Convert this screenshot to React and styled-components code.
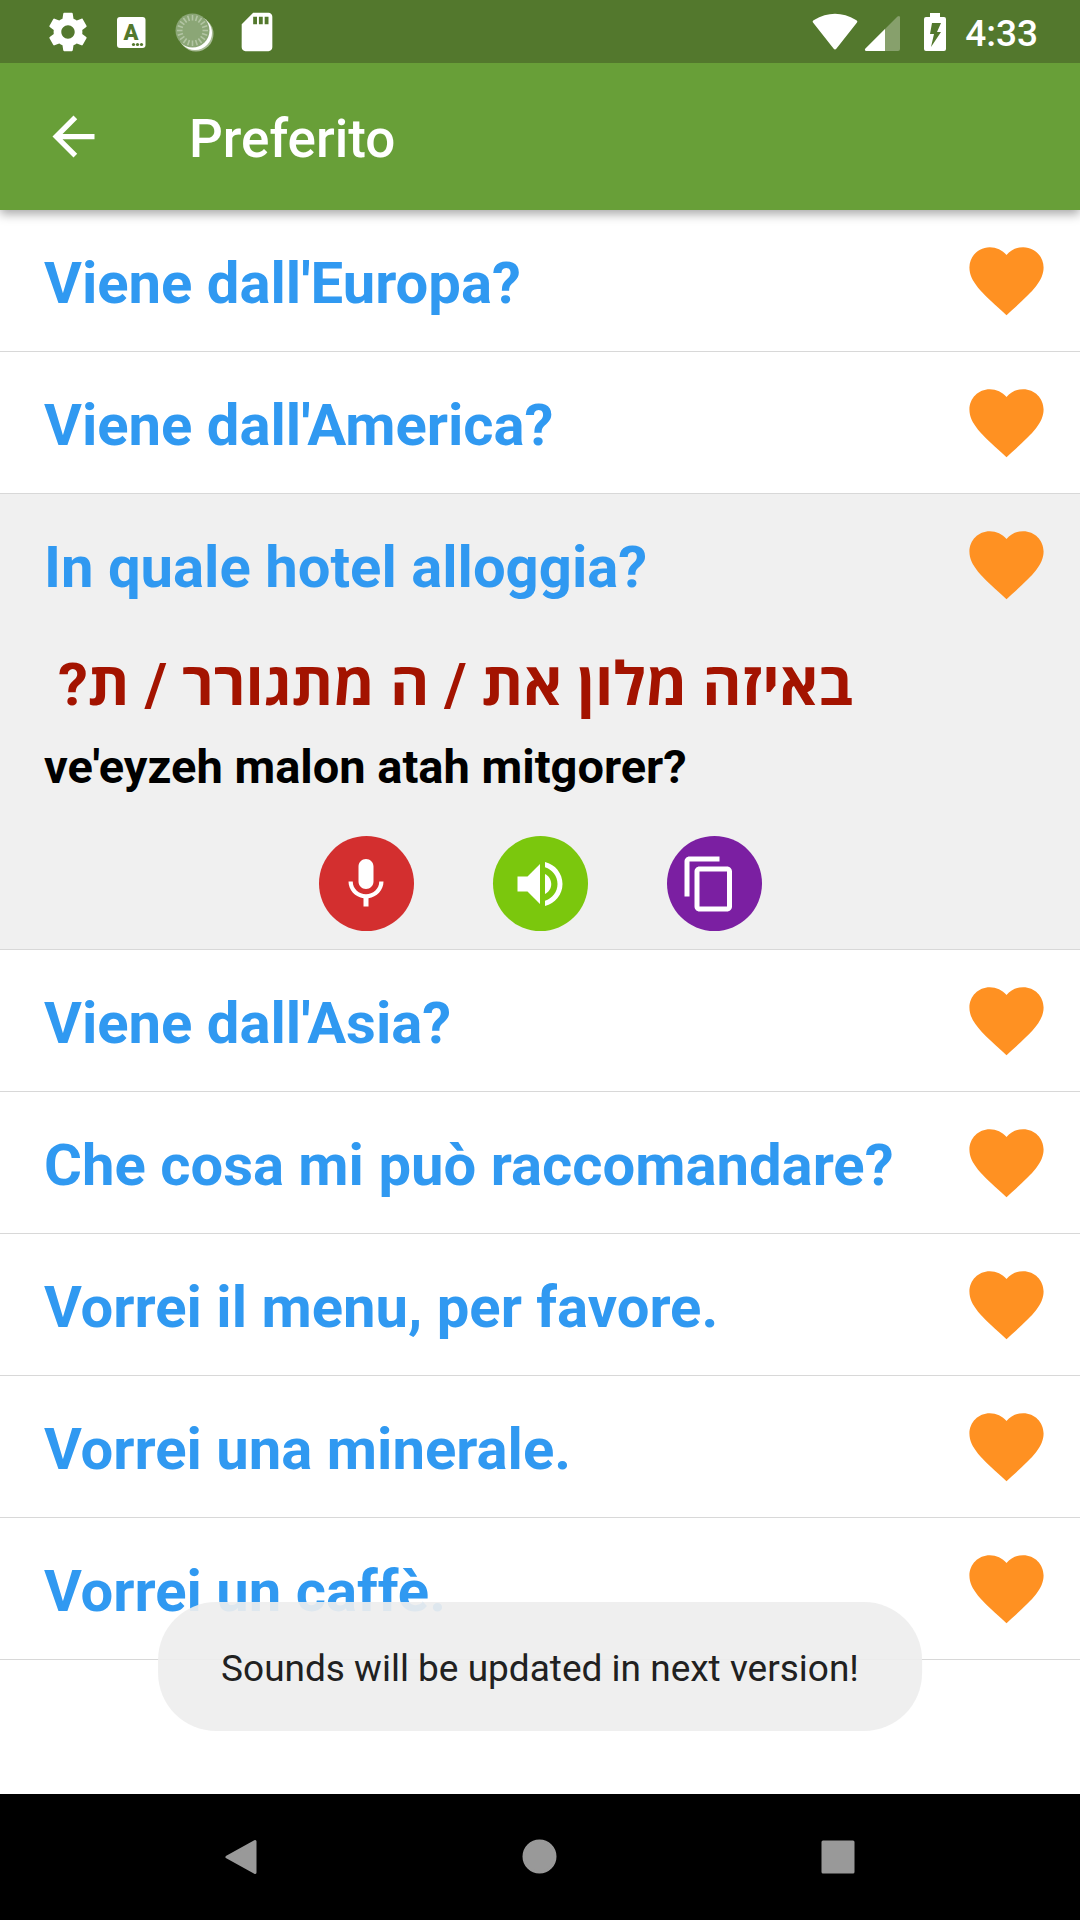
import styled, { createGlobalStyle } from "styled-components";

const phrases = [
  { text: "Viene dall'Europa?" },
  { text: "Viene dall'America?" },
  {
    text: "In quale hotel alloggia?",
    hebrew: "באיזה מלון את / ה מתגורר / ת?",
    spoken: "ve'eyzeh malon atah mitgorer?",
  },
  { text: "Viene dall'Asia?" },
  { text: "Che cosa mi può raccomandare?" },
  { text: "Vorrei il menu, per favore." },
  { text: "Vorrei una minerale." },
  { text: "Vorrei un caffè." },
];

const sunRays = Array.from({ length: 20 }, (_, i) => i * 18);

export default function App() {
  return (
    <>
      <GlobalStyle />
      <Screen>
        <StatusBar>
          <StatusGroup>
            <SettingsIcon />
            <KeyboardIcon />
            <SyncIcon />
            <SdCardIcon />
          </StatusGroup>
          <StatusGroup>
            <NetworkIcons />
            <BatteryIcon />
            <Clock>4:33</Clock>
          </StatusGroup>
        </StatusBar>

        <AppBar>
          <IconButton aria-label="Back">
            <Icon $size={63} viewBox="0 0 24 24">
              <path d="M20 11H7.83l5.59-5.59L12 4l-8 8 8 8 1.41-1.41L7.83 13H20v-2z" />
            </Icon>
          </IconButton>
          <Title>Preferito</Title>
        </AppBar>

        <Main>
          <List>
            {phrases.map((phrase) => (
              <Phrase key={phrase.text} {...phrase} />
            ))}
          </List>
          <Toast role="status">Sounds will be updated in next version!</Toast>
        </Main>

        <NavBar>
          <IconButton aria-label="Navigate back">
            <NavIcon viewBox="0 0 36 36">
              <path d="M31 2.500v31L3 18z" />
            </NavIcon>
          </IconButton>
          <IconButton aria-label="Home">
            <NavIcon viewBox="0 0 36 36">
              <circle cx="17.500" cy="17.500" r="15.500" />
            </NavIcon>
          </IconButton>
          <IconButton aria-label="Recent apps">
            <NavIcon viewBox="0 0 36 36">
              <rect x="3" y="3" width="30" height="30" />
            </NavIcon>
          </IconButton>
        </NavBar>
      </Screen>
    </>
  );
}

function Phrase({ text, hebrew, spoken }) {
  return (
    <Item $open={Boolean(hebrew)}>
      <Row>
        <PhraseText>{text}</PhraseText>
        <HeartButton aria-label="Remove from favorites">
          <Icon $size={89} viewBox="0 0 24 24">
            <path d="M12 21.35l-1.45-1.32C5.4 15.36 2 12.28 2 8.5 2 5.42 4.42 3 7.5 3c1.74 0 3.41.81 4.5 2.09C13.09 3.81 14.76 3 16.5 3 19.58 3 22 5.42 22 8.5c0 3.78-3.4 6.86-8.55 11.54L12 21.35z" />
          </Icon>
        </HeartButton>
      </Row>
      {hebrew && (
        <Details>
          <Hebrew lang="he" dir="rtl">
            {hebrew}
          </Hebrew>
          <Spoken>{spoken}</Spoken>
          <Actions>
            <RoundButton $color="#d32f2f" aria-label="Record">
              <Icon $size={60} viewBox="0 0 24 24">
                <path d="M12 14c1.66 0 3-1.34 3-3V5c0-1.66-1.34-3-3-3S9 3.34 9 5v6c0 1.66 1.34 3 3 3zm5.3-3c0 3-2.54 5.1-5.3 5.1S6.7 14 6.7 11H5c0 3.41 2.72 6.23 6 6.72V21h2v-3.28c3.28-.48 6-3.3 6-6.72h-1.7z" />
              </Icon>
            </RoundButton>
            <RoundButton $color="#7bc70d" aria-label="Listen">
              <Icon $size={60} viewBox="0 0 24 24">
                <path d="M3 9v6h4l5 5V4L7 9H3zm13.5 3c0-1.77-1.02-3.29-2.5-4.03v8.05c1.48-.73 2.5-2.25 2.5-4.02zM14 3.23v2.06c2.89.86 5 3.54 5 6.71s-2.11 5.85-5 6.71v2.06c4.01-.91 7-4.49 7-8.77s-2.99-7.86-7-8.77z" />
              </Icon>
            </RoundButton>
            <RoundButton $color="#7b1fa2" aria-label="Copy">
              <Icon $size={60} viewBox="1.8 0 24 24">
                <path d="M16 1H4c-1.1 0-2 .9-2 2v14h2V3h12V1zm3 4H8c-1.1 0-2 .9-2 2v14c0 1.1.9 2 2 2h11c1.1 0 2-.9 2-2V7c0-1.1-.9-2-2-2zm0 16H8V7h11v14z" />
              </Icon>
            </RoundButton>
          </Actions>
        </Details>
      )}
    </Item>
  );
}

function SettingsIcon() {
  return (
    <Icon $size={46} viewBox="0 0 24 24">
      <path d="M19.43 12.98c.04-.32.07-.64.07-.98s-.03-.66-.07-.98l2.11-1.65c.19-.15.24-.42.12-.64l-2-3.46c-.12-.22-.39-.3-.61-.22l-2.49 1c-.52-.4-1.08-.73-1.69-.98l-.38-2.65C14.46 2.18 14.25 2 14 2h-4c-.25 0-.46.18-.49.42l-.38 2.65c-.61.25-1.17.59-1.69.98l-2.49-1c-.23-.09-.49 0-.61.22l-2 3.46c-.13.22-.07.49.12.64l2.11 1.65c-.04.32-.07.65-.07.98s.03.66.07.98l-2.11 1.65c-.19.15-.24.42-.12.64l2 3.46c.12.22.39.3.61.22l2.49-1c.52.4 1.08.73 1.69.98l.38 2.65c.03.24.24.42.49.42h4c.25 0 .46-.18.49-.42l.38-2.65c.61-.25 1.17-.59 1.69-.98l2.49 1c.23.09.49 0 .61-.22l2-3.46c.12-.22.07-.49-.12-.64l-2.11-1.65zM12 15.5c-1.93 0-3.5-1.57-3.5-3.5s1.57-3.5 3.5-3.5 3.5 1.57 3.5 3.5-1.57 3.5-3.5 3.5z" />
    </Icon>
  );
}

function KeyboardIcon() {
  return (
    <Icon $size={46} viewBox="0 0 46 46">
      <rect x="9" y="8" width="28.500" height="31" rx="3" />
      <IconLetter x="23" y="31">
        A
      </IconLetter>
      <g fill="#53782d">
        <circle cx="25.500" cy="35.500" r="1.600" />
        <circle cx="29.500" cy="35.500" r="1.600" />
        <circle cx="33.500" cy="35.500" r="1.600" />
      </g>
    </Icon>
  );
}

function SyncIcon() {
  return (
    <Icon $size={46} viewBox="0 0 46 46">
      <circle cx="25" cy="25" r="17.500" opacity="0.5" />
      <circle cx="24" cy="24" r="17" />
      <circle cx="21.500" cy="21.500" r="17" fill="#8ba676" />
      <g stroke="#b3c5a4" strokeWidth="1.600">
        {sunRays.map((angle) => (
          <path
            key={angle}
            d="M21.500 6v5.500"
            transform={`rotate(${angle} 21.5 21.5)`}
          />
        ))}
      </g>
    </Icon>
  );
}

function SdCardIcon() {
  return (
    <Icon $size={46} viewBox="0 0 24 24">
      <path d="M18 2h-8L4.02 8 4 20c0 1.1.9 2 2 2h12c1.1 0 2-.9 2-2V4c0-1.1-.9-2-2-2zm-6 6h-2V4h2v4zm3 0h-2V4h2v4zm3 0h-2V4h2v4z" />
    </Icon>
  );
}

function NetworkIcons() {
  return (
    <StatusSvg width="93" height="46" viewBox="0 0 93 46">
      <path d="M1 13.500Q0 12 2 11Q23 -1.500 44 11Q46 12 45 13.500L24.500 39.500Q23 41.500 21.500 39.500z" />
      <path
        d="M54 42Q52 41 53.500 39.500L85.500 7.500Q88 6 88 8.500V40Q88 42 86 42z"
        opacity="0.3"
      />
      <path d="M54 42Q52 41 53.500 39.500L73 20V42z" />
    </StatusSvg>
  );
}

function BatteryIcon() {
  return (
    <StatusSvg width="26" height="46" viewBox="0 0 26 46">
      <path
        fillRule="evenodd"
        d="M8 4h10v4h4q2 0 2 2v30q0 2-2 2H4q-2 0-2-2V10q0-2 2-2h4zM10 14L8 25h4L9 38l10-15h-4l4-9z"
      />
    </StatusSvg>
  );
}

const GlobalStyle = createGlobalStyle`
  * {
    box-sizing: border-box;
  }

  body {
    margin: 0;
    background-color: white;
    font-family: Roboto, "Open Sans", sans-serif;
  }
`;

const Screen = styled.div`
  display: flex;
  flex-direction: column;
  min-height: 100vh;
`;

const StatusBar = styled.div`
  display: flex;
  justify-content: space-between;
  align-items: center;
  height: 63px;
  padding: 0 42px 0 45px;
  background-color: #53782d;
  color: white;
  z-index: 2;
`;

const StatusGroup = styled.div`
  display: flex;
  align-items: center;
  gap: 17px;
`;

const Icon = styled.svg`
  display: block;
  width: ${({ $size }) => $size}px;
  height: ${({ $size }) => $size}px;
  fill: currentColor;
`;

const StatusSvg = styled.svg`
  display: block;
  fill: currentColor;
`;

const IconLetter = styled.text`
  fill: #53782d;
  font-size: 22px;
  font-weight: 900;
  text-anchor: middle;
`;

const Clock = styled.span`
  padding-top: 4px;
  font-size: 37px;
  font-weight: 500;
  line-height: 46px;
`;

const AppBar = styled.header`
  display: flex;
  align-items: center;
  gap: 84px;
  height: 147px;
  padding: 0 42px;
  background-color: #689f38;
  color: white;
  box-shadow: 0 4px 10px rgba(0, 0, 0, 0.35);
  z-index: 1;
`;

const IconButton = styled.button`
  padding: 0;
  border: 0;
  background: none;
  color: inherit;
`;

const Title = styled.h1`
  margin: 0;
  padding-top: 4px;
  font-size: 53px;
  font-weight: 500;
`;

const Main = styled.main`
  position: relative;
  flex: 1;
`;

const List = styled.ul`
  margin: 0;
  padding: 0;
  list-style: none;
`;

const Item = styled.li`
  border-bottom: 1px solid #d8d8d8;
  background-color: ${({ $open }) => ($open ? "#f0f0f0" : "white")};
`;

const Row = styled.div`
  display: flex;
  justify-content: space-between;
  align-items: center;
  height: 141px;
  padding: 0 29px 0 44px;
`;

const PhraseText = styled.h2`
  margin: 0;
  padding-top: 4px;
  color: #3099f1;
  font-size: 58px;
  font-weight: 700;
  line-height: 68px;
`;

const HeartButton = styled(IconButton)`
  color: #ff9122;
`;

const Details = styled.div`
  padding: 12px 44px 18px;
`;

const Hebrew = styled.p`
  width: fit-content;
  margin: 0;
  padding-left: 14px;
  color: #a31300;
  font-size: 60px;
  font-weight: 700;
  line-height: 76px;
`;

const Spoken = styled.p`
  margin: 0;
  padding-top: 4px;
  color: black;
  font-size: 47px;
  font-weight: 700;
  line-height: 80px;
`;

const Actions = styled.div`
  display: flex;
  justify-content: center;
  gap: 79px;
  padding-top: 29px;
`;

const RoundButton = styled(IconButton)`
  display: flex;
  justify-content: center;
  align-items: center;
  width: 95px;
  height: 95px;
  border-radius: 50%;
  background-color: ${({ $color }) => $color};
  color: white;
`;

const Toast = styled.div`
  position: absolute;
  bottom: 63px;
  left: 50%;
  transform: translateX(-50%);
  padding: 44px 63px 40px;
  border-radius: 58px;
  background-color: rgba(238, 238, 238, 0.92);
  color: #212121;
  font-size: 37px;
  line-height: 45px;
  white-space: nowrap;
`;

const NavBar = styled.nav`
  display: flex;
  justify-content: center;
  align-items: center;
  gap: 262px;
  height: 126px;
  background-color: black;
  color: #999999;
`;

const NavIcon = styled.svg`
  display: block;
  width: 36px;
  height: 36px;
  fill: currentColor;
  stroke: currentColor;
  stroke-width: 3px;
  stroke-linejoin: round;
`;
